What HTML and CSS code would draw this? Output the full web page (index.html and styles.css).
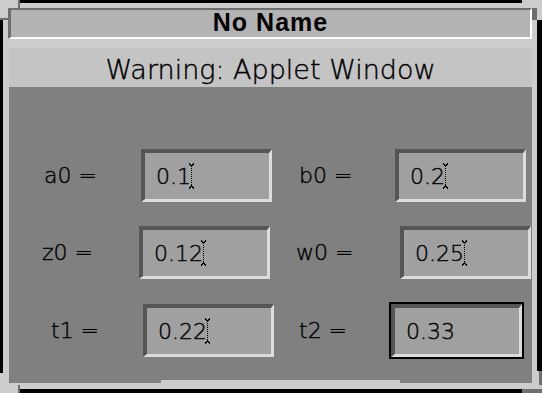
FILE: index.html
```html
<!DOCTYPE html>
<html lang="en">

<head>
    <meta charset="UTF-8">
    <title>No Name</title>
    <link rel="stylesheet" href="styles.css">
</head>

<body>
    <div class="window">
        <div class="corner corner-tl"></div>
        <div class="corner corner-tr"></div>
        <div class="corner corner-bl"></div>
        <div class="corner corner-br"></div>

        <div class="titlebar">No Name</div>
        <div class="warning">Warning: Applet Window</div>

        <div class="applet">
            <div class="row row-1">
                <span class="label">a0 =</span>
                <div class="field">0.1<svg class="caret" width="7" height="26" viewBox="0 0 7 26"><path d="M3.5 3v20" stroke-dasharray="1 1"/><path d="M1 0.5l2.5 2.5 2.5-2.5M1 25.5l2.5-2.5 2.5 2.5"/></svg></div>
                <span class="label">b0 =</span>
                <div class="field">0.2<svg class="caret" width="7" height="26" viewBox="0 0 7 26"><path d="M3.5 3v20" stroke-dasharray="1 1"/><path d="M1 0.5l2.5 2.5 2.5-2.5M1 25.5l2.5-2.5 2.5 2.5"/></svg></div>
            </div>
            <div class="row row-2">
                <span class="label">z0 =</span>
                <div class="field">0.12<svg class="caret" width="7" height="26" viewBox="0 0 7 26"><path d="M3.5 3v20" stroke-dasharray="1 1"/><path d="M1 0.5l2.5 2.5 2.5-2.5M1 25.5l2.5-2.5 2.5 2.5"/></svg></div>
                <span class="label">w0 =</span>
                <div class="field">0.25<svg class="caret" width="7" height="26" viewBox="0 0 7 26"><path d="M3.5 3v20" stroke-dasharray="1 1"/><path d="M1 0.5l2.5 2.5 2.5-2.5M1 25.5l2.5-2.5 2.5 2.5"/></svg></div>
            </div>
            <div class="row row-3">
                <span class="label">t1 =</span>
                <div class="field">0.22<svg class="caret" width="7" height="26" viewBox="0 0 7 26"><path d="M3.5 3v20" stroke-dasharray="1 1"/><path d="M1 0.5l2.5 2.5 2.5-2.5M1 25.5l2.5-2.5 2.5 2.5"/></svg></div>
                <span class="label">t2 =</span>
                <div class="field focused">0.33</div>
            </div>
            <div class="notch"></div>
        </div>
    </div>
</body>

</html>
```

FILE: styles.css
```css
body {
    margin: 0;
    padding: 0;
    background: #000;
    overflow: hidden;
}

.window {
    position: relative;
    width: 542px;
    height: 393px;
    box-sizing: border-box;
    border-style: solid;
    border-color: #000;
    border-width: 3px 5px 4px 3px;
    background-color: #cccccc;
    display: flex;
    flex-direction: column;
}

/* resize handles of the window frame */
.corner {
    position: absolute;
    width: 20px;
    height: 20px;
    box-sizing: border-box;
    border: 0 solid #cccccc;
}

.corner::before,
.corner::after {
    content: "";
    position: absolute;
    background-color: #6e6e6e;
}

.corner-tl {
    top: -3px;
    left: -3px;
    border-top-width: 8px;
    border-left-width: 8px;
}

.corner-tl::before {
    top: -8px;
    left: 10px;
    width: 2px;
    height: 8px;
}

.corner-tl::after {
    top: 10px;
    left: -8px;
    width: 8px;
    height: 2px;
}

.corner-tr {
    top: -3px;
    right: -5px;
    border-top-width: 8px;
    border-right-width: 5px;
}

.corner-tr::before {
    top: 0;
    right: 0;
    width: 5px;
    height: 12px;
}

.corner-bl {
    bottom: -4px;
    left: -3px;
    border-left-width: 8px;
    border-bottom-width: 8px;
}

.corner-bl::before {
    bottom: -8px;
    right: 0;
    width: 2px;
    height: 8px;
}

.corner-br {
    bottom: -4px;
    right: -5px;
    width: 20px;
    height: 22px;
    border-right-width: 8px;
    border-bottom-width: 8px;
}

.corner-br::before {
    top: 0;
    right: -8px;
    width: 3px;
    height: 14px;
}

.corner-br::after {
    bottom: -8px;
    right: -8px;
    width: 20px;
    height: 4px;
}

.titlebar {
    margin: 5px 5px 0 5px;
    height: 31px;
    box-sizing: border-box;
    border-style: solid;
    border-width: 2px 2px 2px 3px;
    border-color: #6e6e6e #fff #fff #6e6e6e;
    background-color: #b3b3b3;
    font-family: "Liberation Sans", Arial, sans-serif;
    font-weight: bold;
    font-size: 25px;
    letter-spacing: 1px;
    line-height: 24px;
    padding-bottom: 3px;
    text-align: center;
    color: #000;
}

.warning {
    margin: 9px 5px 0 6px;
    height: 39px;
    box-sizing: border-box;
    padding-top: 5px;
    background-color: #c4c4c4;
    font-family: "DejaVu Sans", sans-serif;
    font-weight: 200;
    -webkit-text-stroke: 0.4px #000;
    font-size: 27px;
    line-height: 34px;
    text-align: center;
    color: #000;
}

.applet {
    margin: 0 5px 0 6px;
    height: 296px;
    background-color: #808080;
    display: flex;
    flex-direction: column;
    padding-top: 62px;
    box-sizing: border-box;
    font-family: "DejaVu Sans", sans-serif;
    font-weight: 200;
    -webkit-text-stroke: 0.4px #000;
    font-size: 22px;
    color: #000;
}

.row {
    display: flex;
    align-items: center;
    height: 53px;
}

.row-2 {
    margin-top: 24px;
}

.row-3 {
    margin-top: 25px;
}

.label {
    flex: none;
    width: 97px;
}

.field + .label {
    margin-left: 27px;
    width: 96px;
}

.row-1 {
    padding-left: 35px;
}

.row-2 {
    padding-left: 33px;
}

.row-2 .field + .label {
    margin-left: 26px;
    width: 104px;
}

.row-3 {
    padding-left: 42px;
}

.row-3 .label {
    width: 92px;
}

.row-3 .field + .label {
    margin-left: 25px;
    width: 92px;
}

.field {
    flex: none;
    width: 131px;
    height: 53px;
    box-sizing: border-box;
    border-style: solid;
    border-width: 4px 3px 3px 4px;
    border-color: #555 #dcdcdc #dcdcdc #555;
    background-color: #a0a0a0;
    padding-left: 11px;
    display: flex;
    align-items: center;
}

.field.focused {
    outline: 2px solid #000;
}

.caret {
    margin-left: -3px;
    fill: none;
    stroke: #000;
    stroke-width: 1;
    shape-rendering: crispEdges;
}

.notch {
    margin-top: auto;
    margin-left: 152px;
    width: 239px;
    height: 3px;
    background-color: #cccccc;
}
```
